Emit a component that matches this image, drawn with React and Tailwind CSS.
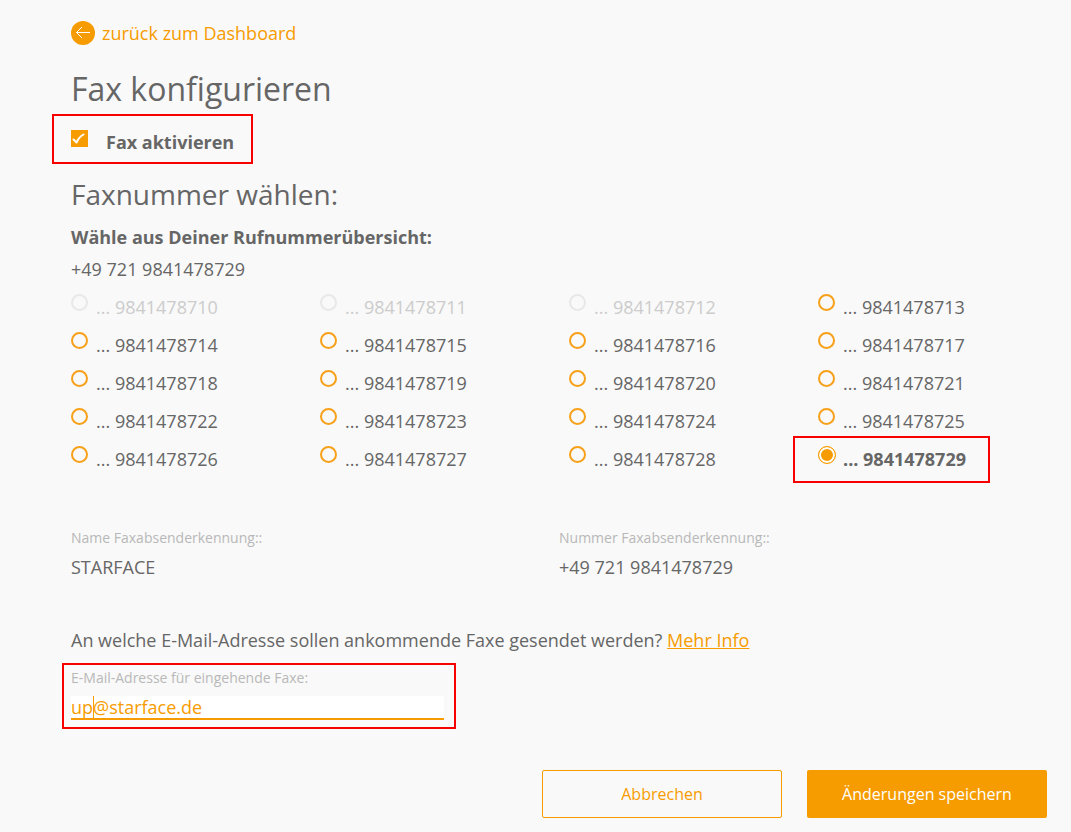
const NUMBERS = Array.from({ length: 20 }, (_, i) => 9841478710 + i);
const TAKEN = [9841478710, 9841478711, 9841478712];
const SELECTED = 9841478729;

function NumberOption({ number }) {
  const disabled = TAKEN.includes(number);
  const selected = number === SELECTED;

  return (
    <label
      className={`relative flex items-start gap-2 h-[38px] leading-[38px] ${disabled ? 'text-[#cccccc]' : ''} ${selected ? 'font-bold' : ''}`}
    >
      <input
        type="radio"
        name="faxNumber"
        value={number}
        disabled={disabled}
        defaultChecked={selected}
        className="appearance-none shrink-0 mt-[6px] size-[17px] rounded-full border-2 border-[#f7a11a] checked:size-[18px] checked:-mr-px checked:border checked:border-[#f79c00] checked:bg-[#f79c00] checked:shadow-[inset_0_0_0_2px_#ffffff] disabled:border-[#e8e8e8]"
      />
      <span>... {number}</span>
      {selected && (
        <span className="absolute -left-[25px] -top-1 -bottom-[5px] w-[197px] border-2 border-[#f80000] pointer-events-none" />
      )}
    </label>
  );
}

function SenderField({ label, value }) {
  return (
    <div>
      <dt className="text-[14px] leading-5 text-[#b8b8b8]">{label}</dt>
      <dd className="mt-[7px]">{value}</dd>
    </div>
  );
}

export default function App() {
  return (
    <main className="min-h-screen bg-[#f9f9f9] pl-[71px] pr-6 pt-[21px] pb-[14px] font-['Open_Sans',sans-serif] text-[18px] leading-6 text-[#666666]">
      <a href="#dashboard" className="inline-flex items-center gap-[7px] text-[#f79c00] align-top">
        <svg width="24" height="24" viewBox="0 0 24 24" fill="none" aria-hidden="true">
          <circle cx="12" cy="12" r="12" fill="#f79c00" />
          <path d="M19 11.5H5.5M11 6L5.5 11.5L11 17" stroke="#ffffff" strokeWidth="1" />
        </svg>
        zurück zum Dashboard
      </a>

      <h1 className="mt-[22px] text-[32px] leading-[44px]">Fax konfigurieren</h1>

      {/* Activation */}
      <label className="mt-[3px] -ml-[19px] flex w-[201px] h-[50px] items-start border-2 border-[#f80000] pl-[17px] pt-[14px] font-bold">
        <span className="relative block size-[17px] shrink-0">
          <input type="checkbox" defaultChecked className="block appearance-none size-[17px] bg-[#f79c00]" />
          <svg className="absolute inset-0 pointer-events-none" width="17" height="17" viewBox="0 0 17 17" fill="none" aria-hidden="true">
            <path d="M2.5 9.5L5.5 12.5Q8 7 12.5 4.5" stroke="#ffffff" strokeWidth="2" strokeLinecap="round" strokeLinejoin="round" />
          </svg>
        </span>
        <span className="ml-[18px]">Fax aktivieren</span>
      </label>

      {/* Number selection */}
      <h2 className="mt-[11px] text-[28px] leading-[38px]">Faxnummer wählen:</h2>
      <p className="mt-2 font-bold leading-8">Wähle aus Deiner Rufnummerübersicht:</p>
      <p className="leading-8">+49 721 9841478729</p>
      <div className="mt-[3px] -mr-5 grid grid-cols-4">
        {NUMBERS.map((number) => (
          <NumberOption key={number} number={number} />
        ))}
      </div>

      <dl className="mt-[50px] grid grid-cols-2">
        <SenderField label="Name Faxabsenderkennung::" value="STARFACE" />
        <SenderField label="Nummer Faxabsenderkennung::" value="+49 721 9841478729" />
      </dl>

      {/* E-mail */}
      <p className="mt-[49px]">
        An welche E-Mail-Adresse sollen ankommende Faxe gesendet werden?{' '}
        <a href="#info" className="text-[#f79c00] underline">Mehr Info</a>
      </p>
      <div className="mt-[11px] -ml-[9px] max-w-[394px] border-2 border-[#f80000] pl-[7px] pr-[10px] pt-[3px] pb-[7px]">
        <label htmlFor="email" className="block text-[14px] leading-5 text-[#b8b8b8]">
          E-Mail-Adresse für eingehende Faxe:
        </label>
        <div className="relative mt-2">
          <input
            id="email"
            type="email"
            defaultValue="up@starface.de"
            className="block w-full h-6 border-b-2 border-[#f79c00] bg-white text-[#f79c00] outline-none"
          />
          <span className="absolute left-[22px] top-0 h-[22px] w-px bg-[#f79c00]" />
        </div>
      </div>

      <div className="mt-[41px] flex justify-end gap-[25px]">
        <button type="button" className="h-12 w-60 rounded-xs border border-[#f79c00] text-[16px] text-[#f79c00]">
          Abbrechen
        </button>
        <button type="submit" className="h-12 w-60 rounded-xs bg-[#f79c00] text-[16px] text-white">
          Änderungen speichern
        </button>
      </div>
    </main>
  );
}
